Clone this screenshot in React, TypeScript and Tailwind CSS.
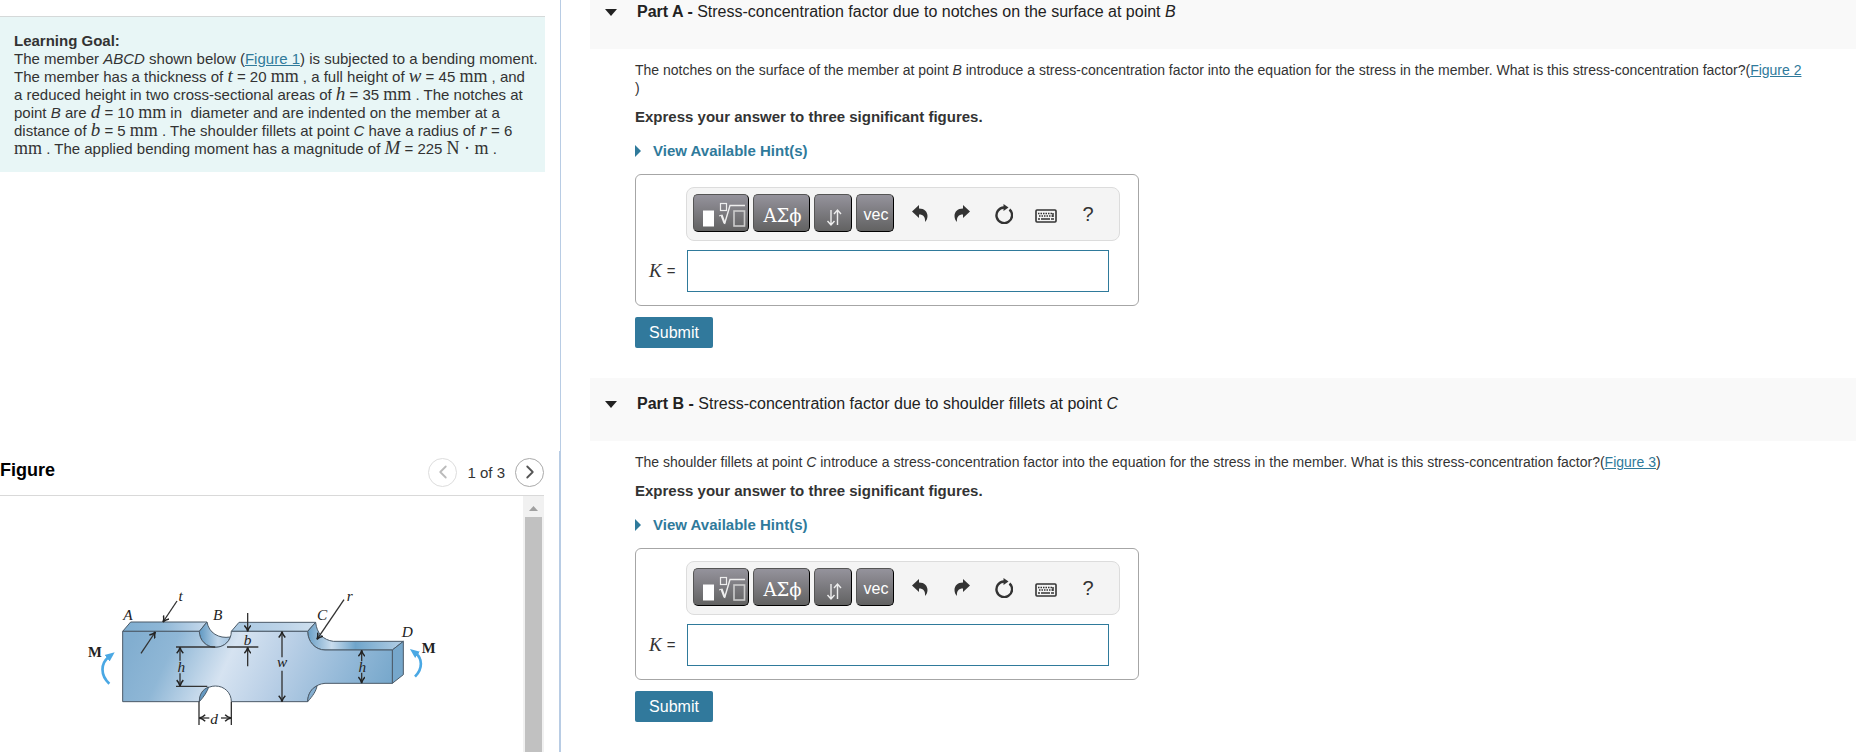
import type { ReactNode } from "react";
import { FiChevronLeft, FiChevronRight } from "react-icons/fi";

function Var({ children }: { children: ReactNode }) {
  return <i className="font-['Liberation_Serif',serif] text-[19px] leading-[0px]">{children}</i>;
}

function Unit({ children }: { children: ReactNode }) {
  return <span className="font-['Liberation_Serif',serif] text-[18px] leading-[0px]">{children}</span>;
}

function FigureLink({ children }: { children: ReactNode }) {
  return (
    <a href="#figure" className="text-[#2f7a9b] underline">
      {children}
    </a>
  );
}

function BeamFigure() {
  return (
    <svg
      className="h-[182px] w-[380px] font-['Liberation_Serif',serif]"
      viewBox="0 0 1140 546"
      role="img"
      aria-label="Notched member ABCD under bending moment M"
    >
      <defs>
        <linearGradient id="front" gradientUnits="userSpaceOnUse" x1="200" y1="180" x2="920" y2="520">
          <stop offset="0" stopColor="#82aed0" />
          <stop offset="0.15" stopColor="#8fb7d6" />
          <stop offset="0.36" stopColor="#d6e3f1" />
          <stop offset="0.55" stopColor="#b9cfe6" />
          <stop offset="0.8" stopColor="#8fb6d6" />
          <stop offset="1" stopColor="#6fa3c8" />
        </linearGradient>
        <linearGradient id="top" x1="0" y1="0" x2="1" y2="0">
          <stop offset="0" stopColor="#7faed1" />
          <stop offset="0.45" stopColor="#8db6d6" />
          <stop offset="1" stopColor="#c6d9ec" />
        </linearGradient>
        <linearGradient id="topRight" x1="0" y1="0" x2="1" y2="0">
          <stop offset="0" stopColor="#a9c8e1" />
          <stop offset="0.6" stopColor="#bcd3e8" />
          <stop offset="1" stopColor="#cfe0ef" />
        </linearGradient>
        <linearGradient id="notch" x1="0" y1="0" x2="1" y2="0">
          <stop offset="0" stopColor="#5f98c2" />
          <stop offset="0.6" stopColor="#c0d6ea" />
          <stop offset="1" stopColor="#a2c3df" />
        </linearGradient>
        <linearGradient id="fillet" x1="0" y1="0" x2="1" y2="0">
          <stop offset="0" stopColor="#6a9fc6" />
          <stop offset="0.25" stopColor="#c9dced" />
          <stop offset="0.5" stopColor="#6fa5cb" />
          <stop offset="1" stopColor="#b4cfe5" />
        </linearGradient>
        <marker id="open" viewBox="0 0 20 20" refX="18" refY="10" markerWidth="22" markerHeight="22" markerUnits="userSpaceOnUse" orient="auto-start-reverse">
          <path d="M2 1 Q9 8 18 10 Q9 12 2 19" fill="none" stroke="#222" strokeWidth="4" />
        </marker>
        <marker id="moment" viewBox="0 0 30 30" refX="6" refY="15" markerWidth="30" markerHeight="30" markerUnits="userSpaceOnUse" orient="auto">
          <path d="M0 3 L29 15 L0 27 Z" fill="#4aa8e4" />
        </marker>
      </defs>

      <g stroke="#4b5a68" strokeWidth="3" strokeLinejoin="round">
        <path d="M158 184 L182 156 H411 L388 184 Z" fill="url(#top)" />
        <path d="M388 184 L411 156 C416 188 446 207 481 201 C474 220 458 232 436 232 C408 232 388 210 388 184 Z" fill="url(#notch)" />
        <path d="M484 184 L507 157 H737 L713 184 Z" fill="url(#topRight)" />
        <path d="M713 184 L737 157 C740 190 760 210 790 214 H1000 L967 240 H765 C735 240 713 214 713 184 Z" fill="url(#fillet)" />
        <path d="M967 240 L1000 214 V314 L967 340 Z" fill="#76a7cb" />
        <path
          d="M158 184 H388 C388 212 410 232 436 232 C463 232 484 212 484 184 H713 C713 214 735 240 765 240 H967 V340 H765 C735 342 713 366 713 395 H484 C484 368 463 348 436 348 C410 348 388 368 388 395 H158 Z"
          fill="url(#front)"
        />
        <path d="M388 395 C388 372 398 358 416 351 C412 364 402 380 388 395 Z" fill="#6499c2" />
        <path d="M713 395 C713 372 725 354 741 348 C738 364 728 378 713 395 Z" fill="#85afd1" />
      </g>

      <g stroke="#333" strokeWidth="4" fill="none">
        <path d="M318 231 H436 M318 349 H412 M471 231 H565" />
        <path d="M387 395 V465 M484 395 V465" />
        <path d="M321 93 L279 156" markerEnd="url(#open)" />
        <path d="M213 250 L256 186" markerEnd="url(#open)" />
        <path d="M822 89 L741 208" markerEnd="url(#open)" />
        <path d="M533 129 V184" markerEnd="url(#open)" />
        <path d="M533 289 V232" markerEnd="url(#open)" />
        <path d="M330 272 V232" markerEnd="url(#open)" />
        <path d="M330 310 V348" markerEnd="url(#open)" />
        <path d="M636 262 V185" markerEnd="url(#open)" />
        <path d="M636 302 V395" markerEnd="url(#open)" />
        <path d="M875 274 V241" markerEnd="url(#open)" />
        <path d="M875 308 V339" markerEnd="url(#open)" />
        <path d="M418 444 H388" markerEnd="url(#open)" />
        <path d="M453 444 H483" markerEnd="url(#open)" />
      </g>

      <g stroke="#4aa8e4" strokeWidth="8" fill="none">
        <path d="M118 341 C90 315 92 280 116 261" markerEnd="url(#moment)" />
        <path d="M1035 320 C1060 295 1056 265 1038 251" markerEnd="url(#moment)" />
      </g>

      <g fill="#222" fontStyle="italic" fontSize="46" textAnchor="middle">
        <text x="174" y="150">A</text>
        <text x="443" y="150">B</text>
        <text x="756" y="150">C</text>
        <text x="1012" y="200">D</text>
        <text x="332" y="94">t</text>
        <text x="839" y="94">r</text>
        <text x="533" y="226">b</text>
        <text x="334" y="305">h</text>
        <text x="636" y="292">w</text>
        <text x="877" y="306">h</text>
        <text x="432" y="461">d</text>
      </g>
      <g fill="#222" fontWeight="bold" fontSize="44" textAnchor="middle">
        <text x="75" y="262">M</text>
        <text x="1076" y="248">M</text>
      </g>
    </svg>
  );
}

const paletteButton =
  "flex h-[38px] items-center justify-center rounded-[5px] border border-t-[#555] border-l-[#555] border-r-black border-b-black bg-linear-to-b from-[#95939c] to-[#626262] text-white";
const toolButton = "flex h-6 w-[30px] items-center justify-center text-[#333]";

function TemplateIcon() {
  return (
    <svg className="h-9 w-[54px] shrink-0" viewBox="0 0 54 36" fill="none" stroke="#eee" aria-hidden="true">
      <path d="M9 15.500 h11 v16 h-11 z" fill="#fff" stroke="none" />
      <rect x="26.500" y="8.500" width="6" height="7" strokeWidth="1.200" />
      <path d="M25 21 L27.500 20" />
      <path d="M27.500 20 L30.500 28" strokeWidth="2.200" />
      <path d="M30.500 29 L36 10.500 H51" strokeWidth="1.400" />
      <rect x="40" y="16" width="10.500" height="15" stroke="#ccc" strokeWidth="1.600" />
    </svg>
  );
}

function ArrowsIcon() {
  return (
    <svg className="h-9 w-[37px] shrink-0" viewBox="0 0 37 36" fill="none" stroke="#eee" strokeWidth="1.400" aria-hidden="true">
      <path d="M16 15 V29.500 M12.500 26 L16 30 L19.500 26" />
      <path d="M22.500 30 V15 M19 19 L22.500 15 L26 19" />
    </svg>
  );
}

function UndoIcon() {
  return (
    <svg className="h-[18px] w-4" viewBox="0 0 16 18" fill="currentColor" aria-hidden="true">
      <path d="M0 6.500 L7 0 V3.500 C12.500 3.500 15.500 7 15.500 11 C15.500 13.500 14.500 15.500 13 17 C13.500 12 11.500 9.500 7 9.500 V13 Z" />
    </svg>
  );
}

function RedoIcon() {
  return (
    <svg className="h-[18px] w-4" viewBox="0 0 16 18" fill="currentColor" aria-hidden="true">
      <path d="M16 6.500 L9 0 V3.500 C3.500 3.500 0.500 7 0.500 11 C0.500 13.500 1.500 15.500 3 17 C2.500 12 4.500 9.500 9 9.500 V13 Z" />
    </svg>
  );
}

function ResetIcon() {
  return (
    <svg className="h-5 w-[18px]" viewBox="0 0 18 20" fill="none" stroke="currentColor" aria-hidden="true">
      <path d="M14.500 5.500 A7.800 7.800 0 1 1 9 3.500" strokeWidth="2.400" />
      <path d="M8.500 0 L13.500 3.500 L8.500 7 Z" fill="currentColor" stroke="none" />
    </svg>
  );
}

function KeyboardIcon() {
  return (
    <svg className="h-[14px] w-[22px]" viewBox="0 0 22 14" fill="none" stroke="currentColor" aria-hidden="true">
      <rect x="1" y="1" width="20" height="12" rx="1" strokeWidth="1.600" />
      <path d="M3 4.500 H18 M4 7 H18" strokeWidth="1.500" strokeDasharray="1.500 1" />
      <path d="M3 10 H5 M6 10 H15 M16 10 H19 M18 4 V8" strokeWidth="1.500" />
    </svg>
  );
}

function AnswerBox({ id }: { id: string }) {
  return (
    <div className="mt-[15px] w-[504px] rounded-[6px] border border-[#a6a6a6] pt-3 pb-[13px] pl-[13px]">
      <div
        role="toolbar"
        aria-label="Math input"
        className="ml-[37px] flex h-[54px] w-[434px] items-center rounded-[8px] border border-[#dcdcdc] bg-[#f4f4f4] pb-[2px] pl-[6px]"
      >
        <div className="flex gap-1">
          <button type="button" aria-label="Templates" className={`${paletteButton} w-14`}>
            <TemplateIcon />
          </button>
          <button
            type="button"
            className={`${paletteButton} w-[57px] pt-1 pl-[2px] font-['DejaVu_Serif',serif] text-[18px]`}
          >
            ΑΣϕ
          </button>
          <button type="button" aria-label="Arrows" className={`${paletteButton} w-[38px]`}>
            <ArrowsIcon />
          </button>
          <button type="button" className={`${paletteButton} w-[38px] pt-1 pl-[2px] text-[16px]`}>
            vec
          </button>
        </div>
        <div className="ml-[11px] flex gap-3 pt-[2px]">
          <button type="button" aria-label="Undo" className={toolButton}>
            <UndoIcon />
          </button>
          <button type="button" aria-label="Redo" className={toolButton}>
            <RedoIcon />
          </button>
          <button type="button" aria-label="Reset" className={toolButton}>
            <ResetIcon />
          </button>
          <button type="button" aria-label="Keyboard shortcuts" className={`${toolButton} pt-1`}>
            <KeyboardIcon />
          </button>
          <button type="button" aria-label="Help" className={`${toolButton} text-[20px]`}>
            ?
          </button>
        </div>
      </div>
      <div className="mt-[9px] flex h-[42px] items-center">
        <label htmlFor={id} className="flex w-[38px] items-center gap-[5px] text-[15px]">
          <Var>K</Var>=
        </label>
        <input id={id} type="text" className="h-[42px] w-[422px] border border-[#2f7a9b] bg-white px-2 outline-none" />
      </div>
    </div>
  );
}

interface PartProps {
  id: string;
  label: string;
  title: ReactNode;
  children: ReactNode;
}

function Part({ id, label, title, children }: PartProps) {
  return (
    <section className="mb-[30px]">
      <header className="flex h-[63px] items-start bg-[#f9f9f9] pt-4 pl-[15px]">
        <button type="button" className="flex items-center text-left text-[16px] leading-5 text-[#222]">
          <svg className="mr-5 h-[7px] w-3" viewBox="0 0 12 7" fill="#222" aria-hidden="true">
            <path d="M0 0 H12 L6 7 Z" />
          </svg>
          <span>
            <b>{label} -</b> {title}
          </span>
        </button>
      </header>
      <div className="pl-[45px]">
        <p className="pt-3 text-[14px] leading-[18px]">{children}</p>
        <p className="mt-[10px] text-[15px] leading-[19px] font-bold">Express your answer to three significant figures.</p>
        <button type="button" className="mt-[15px] flex items-center text-[15px] leading-[19px] font-bold text-[#2f7a9b]">
          <svg className="mr-3 h-3 w-[6px]" viewBox="0 0 6 12" fill="currentColor" aria-hidden="true">
            <path d="M0 0 L6 6 L0 12 Z" />
          </svg>
          View Available Hint(s)
        </button>
        <div className="-mt-px">
          <AnswerBox id={id} />
        </div>
        <button type="button" className="mt-[11px] h-[31px] w-[78px] rounded-[2px] bg-[#31799c] text-[16px] text-white">
          Submit
        </button>
      </div>
    </section>
  );
}

export default function App() {
  return (
    <div className="flex h-screen overflow-hidden bg-white font-['Liberation_Sans',Arial,sans-serif] text-[#333]">
      <aside className="flex w-[561px] shrink-0 flex-col border-r border-[#b8cce4] pr-[15px]">
        <section className="mt-4 border-t border-[#d5d9d9] bg-[#e8f6f6] pt-[15px] pr-1 pb-[14px] pl-[14px] text-[15px] leading-[18px]">
          <h2 className="font-bold">Learning Goal:</h2>
          <p>
            The member <i>ABCD</i> shown below (<FigureLink>Figure 1</FigureLink>) is subjected to a bending moment.
            <br />
            The member has a thickness of <Var>t</Var> = 20 <Unit>mm</Unit> , a full height of <Var>w</Var> = 45{" "}
            <Unit>mm</Unit> , and
            <br />a reduced height in two cross-sectional areas of <Var>h</Var> = 35 <Unit>mm</Unit> . The notches at
            <br />
            point <i>B</i> are <Var>d</Var> = 10 <Unit>mm</Unit> in&nbsp; diameter and are indented on the member at a
            <br />
            distance of <Var>b</Var> = 5 <Unit>mm</Unit> . The shoulder fillets at point <i>C</i> have a radius of{" "}
            <Var>r</Var> = 6<br />
            <Unit>mm</Unit> . The applied bending moment has a magnitude of <Var>M</Var> = 225 <Unit>N · m</Unit> .
          </p>
        </section>

        <section id="figure" className="-mr-[15px] mt-auto border-r border-[#b8cce4] pr-[15px]">
          <header className="flex h-[45px] items-center justify-between border-b border-[#d9d9d9] pb-[2px]">
            <h2 className="pb-1 text-[18px] font-bold text-black">Figure</h2>
            <nav aria-label="Figures" className="flex items-center text-[15px]">
              <button
                type="button"
                disabled
                aria-label="Previous figure"
                className="flex size-[29px] items-center justify-center rounded-full border border-[#ddd] text-[#bbb]"
              >
                <FiChevronLeft className="size-[22px]" />
              </button>
              <span className="px-[10px] pt-[2px]">1 of 3</span>
              <button
                type="button"
                aria-label="Next figure"
                className="flex size-[29px] items-center justify-center rounded-full border border-[#aaa] text-[#555]"
              >
                <FiChevronRight className="size-[22px]" />
              </button>
            </nav>
          </header>
          <div className="flex h-64 justify-between">
            <div className="pt-[74px] pl-[70px]">
              <BeamFigure />
            </div>
            <div className="flex w-[21px] flex-col items-center bg-[#f1f1f1]">
              <svg className="mt-[10px] mb-[6px] h-[5px] w-[9px]" viewBox="0 0 9 5" fill="#a0a0a0" aria-hidden="true">
                <path d="M0 5 L4.500 0 L9 5 Z" />
              </svg>
              <div className="w-[17px] flex-1 bg-[#c1c1c1]" />
            </div>
          </div>
        </section>
      </aside>

      <main className="-mt-[14px] min-w-0 flex-1 pr-[9px] pl-[29px]">
        <Part
          id="answer-a"
          label="Part A"
          title={
            <>
              Stress-concentration factor due to notches on the surface at point <i>B</i>
            </>
          }
        >
          The notches on the surface of the member at point <i>B</i> introduce a stress-concentration factor into the
          equation for the stress in the member. What is this stress-concentration factor?(
          <FigureLink>Figure 2</FigureLink>
          <br />)
        </Part>
        <Part
          id="answer-b"
          label="Part B"
          title={
            <>
              Stress-concentration factor due to shoulder fillets at point <i>C</i>
            </>
          }
        >
          The shoulder fillets at point <i>C</i> introduce a stress-concentration factor into the equation for the
          stress in the member. What is this stress-concentration factor?(<FigureLink>Figure 3</FigureLink>)
        </Part>
      </main>
    </div>
  );
}
